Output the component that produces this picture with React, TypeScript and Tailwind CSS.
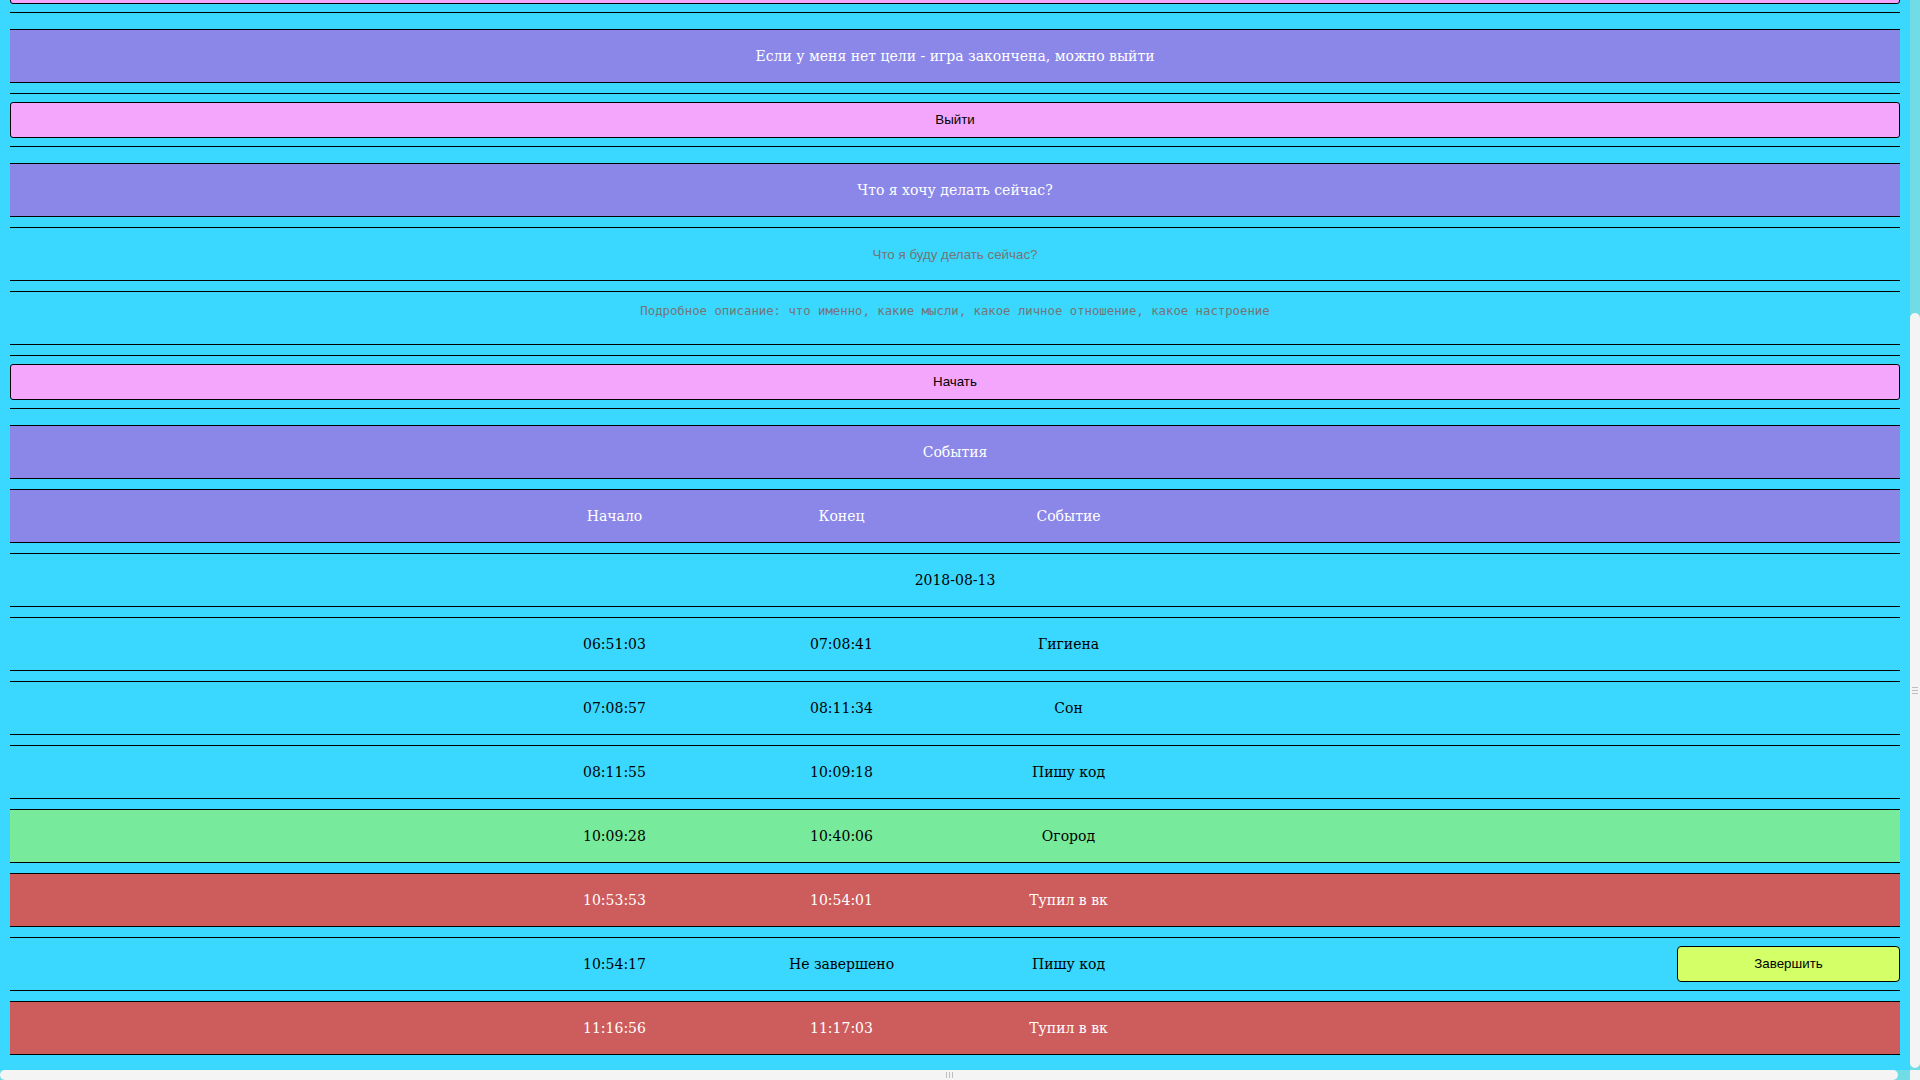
import React from "react";

type Kind = "plain" | "good" | "bad";

const events: { start: string; end: string; title: string; kind: Kind; open?: boolean }[] = [
  { start: "06:51:03", end: "07:08:41", title: "Гигиена", kind: "plain" },
  { start: "07:08:57", end: "08:11:34", title: "Сон", kind: "plain" },
  { start: "08:11:55", end: "10:09:18", title: "Пишу код", kind: "plain" },
  { start: "10:09:28", end: "10:40:06", title: "Огород", kind: "good" },
  { start: "10:53:53", end: "10:54:01", title: "Тупил в вк", kind: "bad" },
  { start: "10:54:17", end: "Не завершено", title: "Пишу код", kind: "plain", open: true },
  { start: "11:16:56", end: "11:17:03", title: "Тупил в вк", kind: "bad" },
];

const rowColor: Record<Kind, string> = {
  plain: "bg-transparent text-black",
  good: "bg-[#77ea9b] text-black",
  bad: "bg-[#cd5c5c] text-white",
};

const serif = "font-['DejaVu_Serif',serif] text-[14px]";
const sans = "font-['Liberation_Sans',Arial,sans-serif] text-[13.33px]";

function Title({ children }: { children: React.ReactNode }) {
  return (
    <div className={`h-[54px] border-y border-black bg-[#8a87e8] text-white flex items-center justify-center ${serif}`}>
      {children}
    </div>
  );
}

function ButtonRow({ label }: { label?: string }) {
  return (
    <div className="h-[54px] border-y border-black flex items-center">
      <button className={`w-full h-[36px] rounded-[3px] border border-black bg-[#f4a6fd] text-black ${sans}`}>
        {label}
      </button>
    </div>
  );
}

function Cols({ cells, extra, className }: { cells: string[]; extra?: React.ReactNode; className: string }) {
  return (
    <div className={`h-[54px] border-y border-black grid grid-cols-[1fr_227px_227px_227px_227px_1fr] items-center ${serif} ${className}`}>
      <div />
      {cells.map((c, i) => (
        <div key={i} className="text-center">
          {c}
        </div>
      ))}
      <div />
      <div className="flex justify-end">{extra}</div>
    </div>
  );
}

export default function App() {
  return (
    <div className="relative h-screen w-full overflow-hidden bg-[#3ad8ff]">
      <div className="-mt-[41px] pl-[10px] pr-[20px] flex flex-col gap-4">
        <div className="flex flex-col gap-[10px]">
          <ButtonRow />
        </div>

        <div className="flex flex-col gap-[10px]">
          <Title>Если у меня нет цели - игра закончена, можно выйти</Title>
          <ButtonRow label="Выйти" />
        </div>

        <div className="flex flex-col gap-[10px]">
          <Title>Что я хочу делать сейчас?</Title>
          <div className="h-[54px] border-y border-black">
            <input
              className={`w-full h-full bg-transparent text-center outline-none placeholder:text-[#757575] ${sans}`}
              placeholder="Что я буду делать сейчас?"
            />
          </div>
          <div className="h-[54px] border-y border-black">
            <textarea
              className="w-full h-full resize-none bg-transparent text-center outline-none pt-[10px] font-['DejaVu_Sans_Mono',monospace] text-[12.3px] placeholder:text-[#757575]"
              placeholder="Подробное описание: что именно, какие мысли, какое личное отношение, какое настроение"
            />
          </div>
          <ButtonRow label="Начать" />
        </div>

        <div className="flex flex-col gap-[10px]">
          <Title>События</Title>
          <Cols cells={["Начало", "Конец", "Событие"]} className="bg-[#8a87e8] text-white" />
          <div className={`h-[54px] border-y border-black flex items-center justify-center text-black ${serif}`}>
            2018-08-13
          </div>
          {events.map((e, i) => (
            <Cols
              key={i}
              cells={[e.start, e.end, e.title]}
              className={rowColor[e.kind]}
              extra={
                e.open ? (
                  <button className={`w-[223px] h-[36px] rounded-[4px] border border-black bg-[#d4ff66] text-black ${sans}`}>
                    Завершить
                  </button>
                ) : null
              }
            />
          ))}
        </div>
      </div>

      {/* scrollbars */}
      <div className="absolute right-0 top-0 w-[10px] h-[1070px] bg-[#70dce6]">
        <div className="absolute left-0 top-[313px] w-[10px] h-[755px] rounded-[5px] bg-[#f4f4f4] flex items-center justify-center">
          <div className="flex flex-col gap-[2px]">
            <div className="w-[6px] h-px bg-[#bdbdbd]" />
            <div className="w-[6px] h-px bg-[#bdbdbd]" />
            <div className="w-[6px] h-px bg-[#bdbdbd]" />
          </div>
        </div>
      </div>
      <div className="absolute left-0 bottom-0 h-[10px] w-[1910px] bg-[#70dce6]">
        <div className="absolute left-0 top-0 h-[10px] w-[1898px] rounded-[5px] bg-[#f4f4f4] flex items-center justify-center">
          <div className="flex gap-[2px]">
            <div className="h-[6px] w-px bg-[#bdbdbd]" />
            <div className="h-[6px] w-px bg-[#bdbdbd]" />
            <div className="h-[6px] w-px bg-[#bdbdbd]" />
          </div>
        </div>
      </div>
      <div className="absolute right-0 bottom-0 w-[10px] h-[10px] bg-[#f4f4f4]" />
    </div>
  );
}
